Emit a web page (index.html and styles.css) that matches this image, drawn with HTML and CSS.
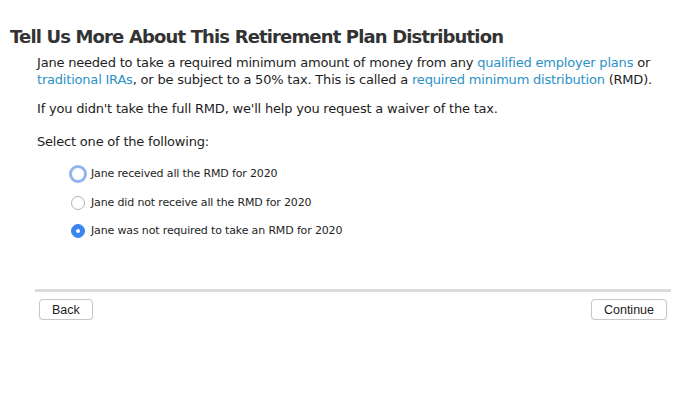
FILE: index.html
```html
<!DOCTYPE html>
<html lang="en">
<head>
  <meta charset="UTF-8">
  <meta name="viewport" content="width=device-width, initial-scale=1.0">
  <title>Retirement Plan Distribution</title>
  <link rel="stylesheet" href="styles.css">
</head>
<body>
  <div class="page">
    <h1>Tell Us More About This Retirement Plan Distribution</h1>

    <div class="content">
      <p>Jane needed to take a required minimum amount of money from any <a href="#">qualified employer plans</a> or
        <a href="#">traditional IRAs</a>, or be subject to a 50% tax. This is called a <a href="#">required minimum distribution</a> (RMD).</p>
      <p>If you didn't take the full RMD, we'll help you request a waiver of the tax.</p>
      <p class="prompt">Select one of the following:</p>

      <!-- RMD answer choices -->
      <div class="choices">
        <label class="choice">
          <span class="radio focused"></span>
          Jane received all the RMD for 2020
        </label>
        <label class="choice">
          <span class="radio"></span>
          Jane did not receive all the RMD for 2020
        </label>
        <label class="choice">
          <span class="radio checked"></span>
          Jane was not required to take an RMD for 2020
        </label>
      </div>
    </div>

    <!-- Navigation -->
    <div class="nav">
      <button class="btn">Back</button>
      <button class="btn">Continue</button>
    </div>
  </div>
</body>
</html>
```

FILE: styles.css
```css
/* General Styles */
body {
  margin: 0;
  padding: 0;
  background: #fff;
  font-family: 'DejaVu Sans', Verdana, sans-serif;
  color: #1e1e1e;
}

.page {
  padding: 25px 20px 0 10px;
}

h1 {
  margin: 0;
  font-size: 18px;
  font-weight: bold;
  color: #333;
  line-height: 24px;
  letter-spacing: -0.85px;
}

/* Body copy */
.content {
  padding: 5px 0 0 27px;
}

.content p {
  margin: 0 0 12px;
  font-size: 13px;
  line-height: 17px;
  letter-spacing: -0.2px;
}

.content a {
  color: #2b91c6;
  text-decoration: none;
}

.content .prompt {
  margin: 16px 0 0;
}

/* Radio list */
.choices {
  display: flex;
  flex-direction: column;
  gap: 12.5px;
  padding: 16px 0 0 34px;
}

.choice {
  display: flex;
  align-items: center;
  gap: 6px;
  font-size: 11px;
  line-height: 16px;
  letter-spacing: -0.15px;
}

.radio {
  width: 12px;
  height: 12px;
  border: 1px solid #b3b3b3;
  border-radius: 50%;
  background: #fff;
  box-sizing: content-box;
  position: relative;
  flex-shrink: 0;
}

.radio.focused {
  border-color: #8fb3ec;
  box-shadow: 0 0 0 2px #8fb3ec;
}

.radio.checked {
  background: #3b86ee;
  border-color: #3b86ee;
}

.radio.checked::after {
  content: "";
  position: absolute;
  left: 4px;
  top: 4px;
  width: 4px;
  height: 4px;
  border-radius: 50%;
  background: #fff;
}

/* Navigation buttons */
.nav {
  margin: 50px 0 0 25px;
  border-top: 3px solid #dcdcdc;
  display: flex;
  justify-content: space-between;
  padding: 7px 4px 0 4px;
}

.btn {
  font-family: 'Liberation Sans', Arial, sans-serif;
  font-size: 12.5px;
  color: #222;
  background: #fff;
  border: 1px solid #c8c8c8;
  border-radius: 4px;
  height: 21px;
  padding: 0 12px;
  box-shadow: 0 1px 1px rgba(0, 0, 0, 0.08);
}
```
